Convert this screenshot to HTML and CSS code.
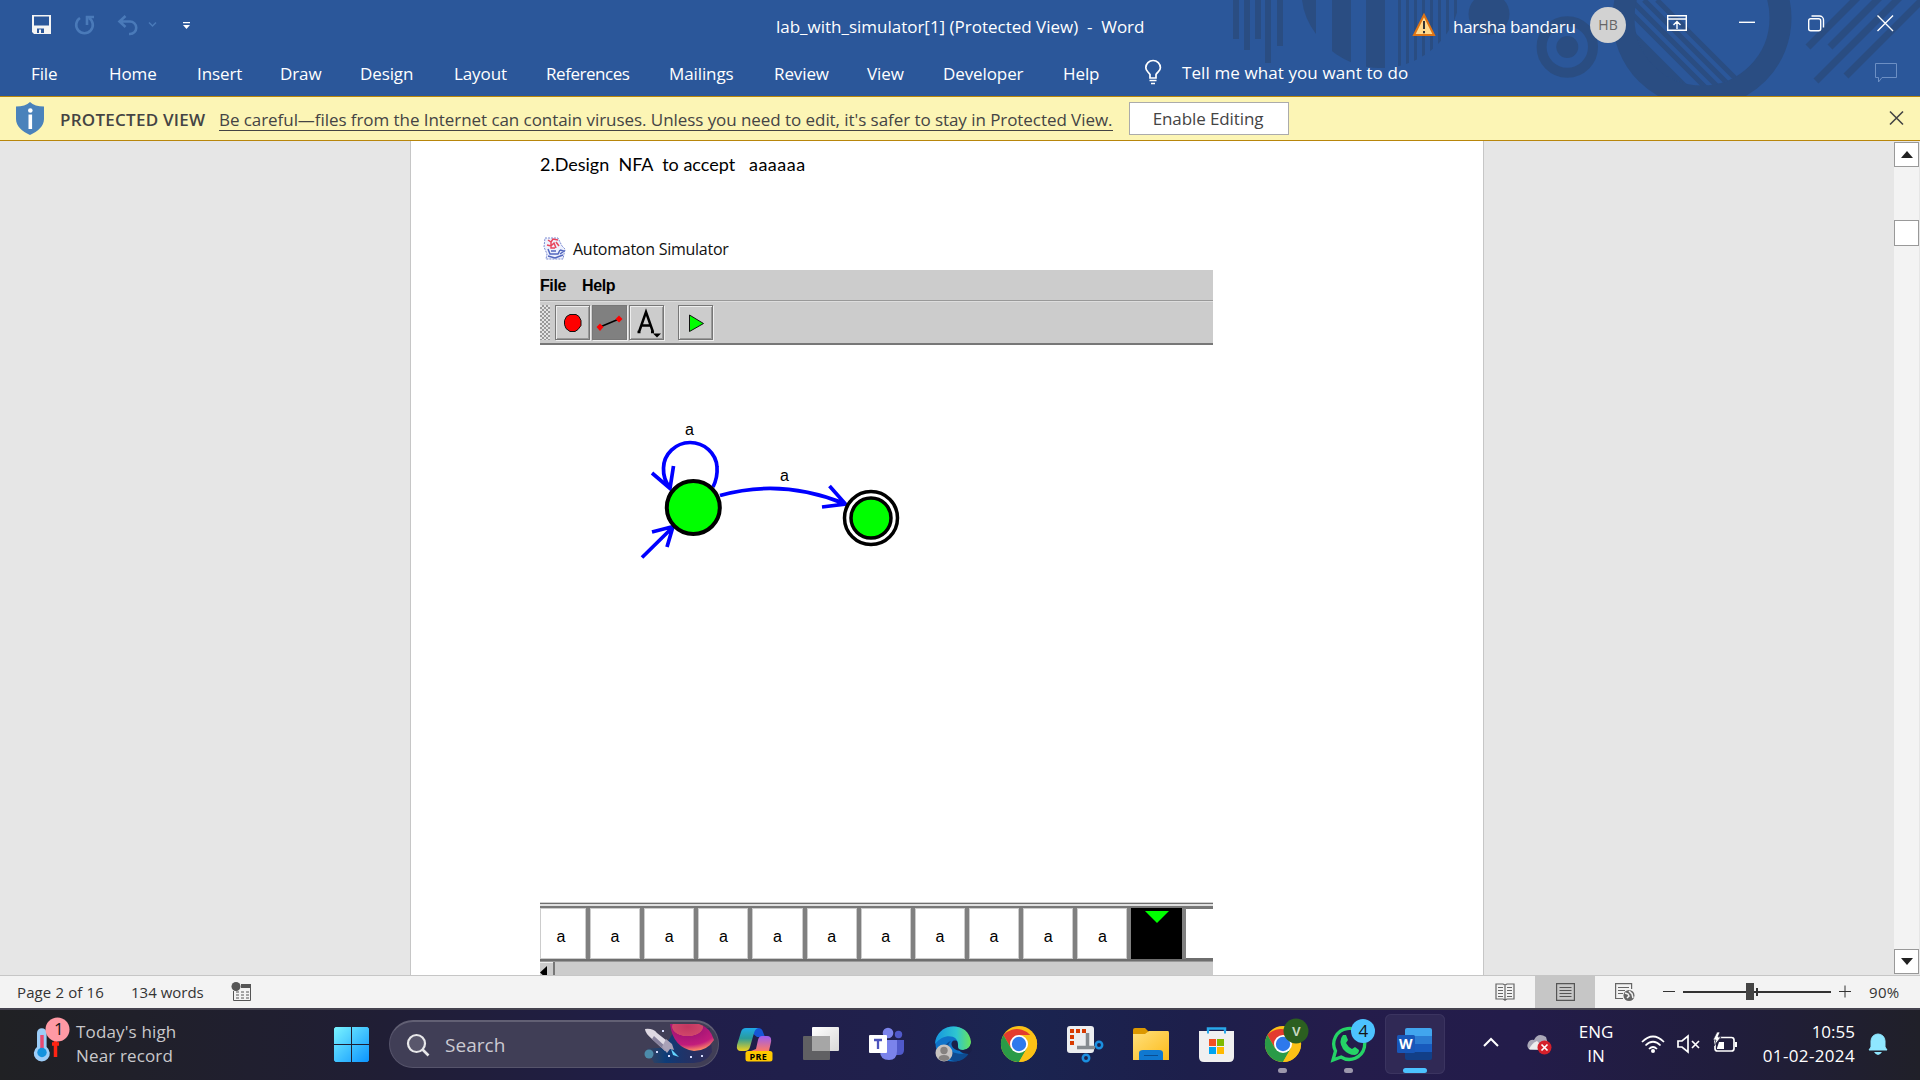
FILE: index.html
```html
<!DOCTYPE html>
<html lang="en">
<head>
<meta charset="utf-8">
<title>lab_with_simulator[1] (Protected View) - Word</title>
<link rel="stylesheet" href="styles.css">
</head>
<body>
<header class="ribbon">
  <svg class="pattern" width="700" height="96" viewBox="1220 0 700 96">
    <defs>
      <clipPath id="ball"><circle cx="1381" cy="-12" r="80"/></clipPath>
      <clipPath id="inner"><circle cx="1702" cy="18" r="68"/></clipPath>
    </defs>
    <g fill="#2a4d82">
      <path d="M1233 0h6v39h-6zM1244 0h6v50h-6zM1255 0h6v39h-6zM1265 0h6v63h-6zM1277 0h6v46h-6z"/>
      <path d="M1302 0h14v34Q1304 18 1302 0z"/>
      <g clip-path="url(#ball)"><path d="M1332 0h19v96h-19zM1366 0h19v96h-19zM1398 0h3v96h-3zM1406 0h3v96h-3zM1414 0h3v96h-3zM1422 0h3v96h-3zM1430 0h3v96h-3zM1438 0h3v96h-3zM1446 0h3v96h-3zM1454 0h3v96h-3z"/></g>
      <circle cx="1489" cy="14" r="20.5"/>
      <circle cx="1567.300" cy="47" r="11"/>
    </g>
    <g fill="none" stroke="#2a4d82">
      <circle cx="1567.300" cy="47" r="25.700" stroke-width="10"/>
      <circle cx="1702" cy="18" r="78.500" stroke-width="22"/>
      <g clip-path="url(#inner)" stroke-width="5">
        <path d="M1657 0l100 100M1644 0l100 100M1631 0l100 100M1618 0l100 100"/>
        <path stroke-width="12" d="M1594 0l100 100"/>
      </g>
      <path stroke-width="7" d="M1808 47l50-50M1830 47l50-50M1816 81l84-84M1846 76l79-79"/>
    </g>
  </svg>
  <div class="titlebar">
    <div class="quick">
      <svg width="170" height="24" viewBox="30 13 170 24">
        <path fill="#f4f4f4" fill-rule="evenodd" d="M32 15h19v19H34l-2-2zM34 16.500v9h15v-9zM37 28.500v4.500h7v-4.500z"/><path fill="#f4f4f4" d="M39 29.500h2v4h-2z"/>
        <g fill="none" stroke="#4a7ab9" stroke-width="2.600"><path d="M80 18a8.300 8.300 0 1 0 9 0M87 25v-8h7"/><path d="M119 21.500h11a6 6 0 0 1 0 12.500h-1M125.500 16l-6 5.500 6 5.500"/><path stroke-width="1.500" d="M149 22.500l3.500 3.500 3.500-3.500"/></g>
        <path fill="#fff" d="M183 22h7v1.200h-7zM183 25h7l-3.500 4z"/>
      </svg>
    </div>
    <div class="doc-title">lab_with_simulator[1] (Protected View)&nbsp; -&nbsp; Word</div>
    <svg class="warn" width="24" height="24" viewBox="0 0 24 24"><path d="M12 2L22 22H2z" fill="#ffd98c" stroke="#e07414" stroke-width="2"/><path d="M12 8v8M12 18v2.200" stroke="#333" stroke-width="2"/></svg>
    <div class="user">harsha bandaru</div>
    <div class="avatar">HB</div>
    <svg class="winbtns" width="230" height="24" viewBox="1667 11 230 24">
      <g fill="none" stroke="#fff" stroke-width="1.400">
        <path d="M1667.700 15.700h18.600v14.600h-18.600zM1668 19h18M1677 29v-7M1673.500 25l3.500-3.500 3.500 3.500"/>
        <path d="M1739 22.300h16" /><rect x="1808.700" y="18.700" width="12" height="12" rx="2"/><path d="M1811.500 16h8a4 4 0 0 1 4 4v7.500"/>
        <path d="M1877.500 15.500l15.500 15.500M1893 15.500l-15.500 15.500"/>
      </g>
    </svg>
  </div>
  <nav class="tabs">
    <span>File</span><span>Home</span><span>Insert</span><span>Draw</span><span>Design</span><span>Layout</span><span class="refs">References</span><span>Mailings</span><span>Review</span><span>View</span><span>Developer</span><span>Help</span>
    <svg width="20" height="26" viewBox="0 0 20 26"><g fill="none" stroke="#fff" stroke-width="1.700"><path d="M6 18v-3.500C4.500 12 1.800 11 1.800 7.800a7.200 7.200 0 0 1 14.600 0c0 3.200-2.900 4.200-4.400 6.700V18zM5.500 20.500h7M7 23.500h4"/></g></svg>
    <span class="tell">Tell me what you want to do</span>
    <svg width="23" height="21" viewBox="0 0 23 21"><path fill="none" stroke="#6c8fc4" d="M.5.500h21v14H7L3.500 19v-4.500h-3z"/></svg>
  </nav>
</header>

<section class="protected">
  <svg width="30" height="34" viewBox="0 0 30 34"><path fill="#4a82bb" d="M15 0c3 3 8 4.500 14 4.500V17c0 7-6 12.500-14 16C7 29.500 1 24 1 17V4.500C7 4.500 12 3 15 0z"/><path fill="#fff" d="M13.500 12.500h3.600V27h-3.600z"/><circle cx="15.300" cy="8.500" r="2.300" fill="#fff"/></svg>
  <b>PROTECTED VIEW</b>
  <span class="msg">Be careful—files from the Internet can contain viruses. Unless you need to edit, it's safer to stay in Protected View.</span>
  <button>Enable Editing</button>
  <svg class="dismiss" width="15" height="14" viewBox="0 0 15 14"><path d="M1 .500l13 13M14 .500L1 13.500" stroke="#444" stroke-width="1.600"/></svg>
</section>

<main class="workspace">
  <article class="page">
    <p class="question">2.Design&nbsp; NFA&nbsp; to accept&nbsp;&nbsp; <span>aaaaaa</span></p>
    <section class="sim">
      <div class="sim-title">
        <svg width="24" height="24" viewBox="0 0 24 24"><path fill="#eef1fd" stroke="#7b8bd2" stroke-dasharray="2 1" d="M2 1h13l4 8 3 3-2 10H3l1-5-3-7z"/><g fill="none"><path stroke="#e8455c" stroke-width="1.500" d="M5 3l3 2 2-3 5 1M4 8l4 1 3-3 2 5M8 5v6h4M13 5l3 4"/><path stroke="#5367be" stroke-width="1.500" d="M5 12l2 5h8l2-4M5 19l7 2 8-3M17 13l4 1-4 3M8 14h5"/></g></svg>
        <span>Automaton Simulator</span>
      </div>
      <div class="sim-menu"><b>File</b><b>Help</b></div>
      <div class="sim-tools">
        <i class="grip"></i>
        <span class="tool"><svg width="35" height="35"><path d="M15 9.500h6l3 2 2 4v5l-3 4-3 2h-5l-4-3-1.500-4v-4l2-4z" fill="red" stroke="#111"/></svg></span>
        <span class="tool on"><svg width="35" height="35"><path d="M8 22l19-8" stroke="#000" stroke-width="1.600"/><path d="M8 18.500l3.500 3.500L8 26l-3.500-4zM27 10.500l3.500 3.500-3.500 3.500-3.500-3.500z" fill="red"/></svg></span>
        <span class="tool"><svg width="35" height="35"><path d="M10 27l7-20 7 20M12 20.500h10M8.500 27h3M22 27h3" fill="none" stroke="#000" stroke-width="2.500"/><path d="M24 28.500h8l-4 4z"/></svg></span>
        <span class="tool run"><svg width="35" height="35"><path d="M11.500 10v16.500L25.500 18.500z" fill="#0f0" stroke="#111"/></svg></span>
      </div>
      <svg class="canvas" width="673" height="557" viewBox="540 345 673 557">
        <g fill="none" stroke="#00f" stroke-width="3.700">
          <path d="M713 487C717 479 717.500 473 717 467A27 26 0 0 0 690 442.500A27 26 0 0 0 663.500 468Q663 479 670 488M652 473L670 488.500 673.500 466"/>
          <path d="M720 495.500Q782 478 845 504M829.500 486L845.500 504 822 507"/>
          <path d="M642 557.500L673 527M652 532L673 526.500 667 547"/>
        </g>
        <circle cx="693.300" cy="507.500" r="26.500" fill="#0f0" stroke="#000" stroke-width="4"/>
        <circle cx="871" cy="518" r="26.500" fill="#fff" stroke="#000" stroke-width="3.500"/>
        <circle cx="871" cy="518" r="20" fill="#0f0" stroke="#000" stroke-width="3.500"/>
        <g class="label"><text x="685" y="435">a</text><text x="780" y="481">a</text></g>
      </svg>
      <div class="tape">
        <span class="first">a</span><span>a</span><span>a</span><span>a</span><span>a</span><span>a</span><span>a</span><span>a</span><span>a</span><span>a</span><span>a</span><span class="head"><svg width="24" height="13"><path d="M0 0h24L12 12z" fill="#0f0"/></svg></span>
      </div>
      <div class="tape-scroll"><i><svg width="7" height="14"><path d="M7 0v13L0 6.500z"/></svg></i></div>
    </section>
  </article>
  <div class="scrollbar">
    <i class="box"><svg width="12" height="7"><path d="M6 0l6 7H0z" fill="#222"/></svg></i>
    <i class="thumb"></i>
    <i class="box down"><svg width="12" height="7"><path d="M0 0h12L6 7z" fill="#222"/></svg></i>
  </div>
</main>

<footer class="status">
  <span class="pages">Page 2 of 16</span><span class="words">134 words</span>
  <svg width="22" height="20" viewBox="0 0 22 20"><path d="M2.500 9v9.500h17V2" fill="none" stroke="#555"/><path d="M10 2h10v4H10z" fill="#555"/><circle cx="5" cy="4.500" r="4.500" fill="#555"/><path d="M5 10h13M5 13h13M5 16h13" stroke="#555" stroke-dasharray="3 2"/></svg>
  <div class="views">
    <span><svg width="20" height="18"><path fill="none" stroke="#666" stroke-width="1.200" d="M10 2v16M1 1h7l2 1 2-1h7v15h-7l-2 1-2-1H1zM3 4.500h5M3 7.500h5M3 10.500h5M3 13.500h5M12 4.500h5M12 7.500h5M12 10.500h5M12 13.500h5"/></svg></span>
    <span class="active"><svg width="19" height="18"><path fill="none" stroke="#555" stroke-width="1.200" d="M.600.600h17.800v16.800H.600zM3.500 4.500h12M3.500 7.500h12M3.500 10.500h12M3.500 13.500h12"/></svg></span>
    <span><svg width="20" height="19"><path fill="none" stroke="#666" stroke-width="1.200" d="M8 15.500H.600V.600h16V6M3 4.500h11M3 7.500h7M3 10.500h5"/><circle cx="14" cy="12.500" r="5.500" fill="#666"/><path d="M10 10l3 1 1 2-2 2M14 8l3 3 1 4" stroke="#f3f3f3" fill="none" stroke-width="1.500"/></svg></span>
  </div>
  <svg class="zoom" width="190" height="18" viewBox="1662 983 190 18"><g stroke="#333"><path d="M1663 991.500h12M1839 991.500h12M1845 985.500v12" /><path stroke-width="2" d="M1683 992h148M1757 988v8"/></g><path fill="#444" d="M1746 983h8v17h-8z"/></svg>
  <span>90%</span>
</footer>

<footer class="taskbar">
  <div class="weather">
    <svg width="38" height="46" viewBox="32 1016 38 46"><path stroke="#ff2413" stroke-width="3.500" d="M55.500 1040v16M52 1043h7"/><path d="M37 1032a4.800 4.800 0 0 1 9.600 0v14a8 8 0 1 1-9.600 0z" fill="#9ccdf8"/><path d="M42 1034v17" stroke="#e84a72" stroke-width="3.500"/><circle cx="42" cy="1051.500" r="4.700" fill="#1492dd"/><circle cx="57.500" cy="1028.500" r="12" fill="#ff99a4"/><text class="badge-text" x="54" y="1034">1</text></svg>
    <div>Today's high<br>Near record</div>
  </div>
  <svg class="start" width="35" height="35"><defs><linearGradient id="win" x2="1" y2="1"><stop stop-color="#7af4ff"/><stop offset="1" stop-color="#0b94ff"/></linearGradient></defs><path fill="url(#win)" d="M1.500 0H17v17H0V1.500zM18 0h15.500L35 1.500V17H18zM0 18h17v17H1.500L0 33.500zM18 18h17v15.500L33.500 35H18z"/></svg>
  <div class="search">
    <svg width="24" height="24"><circle cx="10.500" cy="10.500" r="8.500" fill="#ffffff22" stroke="#e8e8ea" stroke-width="2.200"/><path d="M16.500 16.500l6 6" stroke="#e8e8ea" stroke-width="2.600"/></svg>
    <span>Search</span>
    <svg class="space" width="72" height="40"><defs><linearGradient id="sea"><stop stop-color="#0c4a80" stop-opacity="0"/><stop offset=".3" stop-color="#0e3c78"/><stop offset="1" stop-color="#24205e" stop-opacity=".5"/></linearGradient><radialGradient id="planet" cx=".4" cy=".1" r=".9"><stop stop-color="#c23660"/><stop offset=".38" stop-color="#d0466a"/><stop offset=".4" stop-color="#a91676"/><stop offset=".75" stop-color="#c21c7c"/><stop offset="1" stop-color="#ff8a66"/></radialGradient></defs><path fill="url(#sea)" d="M2 24h18l12-20h34l2 24q-6 11-18 11H10z"/><path d="M26 0h29q11 3 15 16-7 11-20 11Q29 24 26 0z" fill="url(#planet)"/><path d="M1 5q8-1 12 4l14 11-6 7L8 15Q1 9 1 5z" fill="#ded9e3"/><path d="M8 15l13 12 2-3L10 12z" fill="#86809c"/><path d="M22 15l6 5 2 6-4-1-3 4-5-6z" fill="#aaa2b8"/><path d="M27 25l8 8-6-2z" fill="#65d5ff"/><circle cx="5" cy="30" r="4.500" fill="#4c8baa"/><path d="M18 6h2v2h-2zM12 27h2v2h-2zM24 31h2v2h-2zM46 32h2v2h-2zM57 31h2v2h-2z" fill="#d7ddff"/></svg>
  </div>
  <div class="apps">
    <span><svg width="36" height="36"><defs><linearGradient id="cpa" x2="0" y2="1"><stop stop-color="#1fa8e8"/><stop offset=".45" stop-color="#2a9c9a"/><stop offset="1" stop-color="#f2d21c"/></linearGradient><linearGradient id="cpb" x2="0" y2="1"><stop stop-color="#9a5cf0"/><stop offset="1" stop-color="#ff7a64"/></linearGradient></defs><path fill="#1655d6" d="M9 2h12q4 0 5 4l2 5h-8z"/><path fill="url(#cpa)" d="M9 2h12q-3 1-4 5l-4 14q-1 4-5 4H4q-5 0-4-6L4 6q1-4 5-4z"/><path fill="url(#cpb)" d="M25 10h5q5 0 4 6l-2 9H14l5-2 2-9q1-4 4-4z"/><rect x="8.500" y="25" width="27" height="10.500" rx="2.500" fill="#ffc800"/><text class="pre" x="12.500" y="33.500">PRE</text></svg></span>
    <span><svg width="36" height="36"><defs><linearGradient id="tv" x2="1" y2="1"><stop stop-color="#fff"/><stop offset="1" stop-color="#d8d8d8"/></linearGradient></defs><rect y="10" width="27" height="24" rx="1" fill="#606063"/><rect x="9" y="1" width="27" height="24" rx="1" fill="url(#tv)"/><path d="M9 10h18v15H9z" fill="#a6a6a6"/></svg></span>
    <span><svg width="36" height="36"><circle cx="29.500" cy="8.500" r="3.700" fill="#5059c9"/><circle cx="19" cy="7" r="5.300" fill="#7b83eb"/><path d="M24 14h11v10q0 5-5 5h-6z" fill="#5059c9"/><path d="M11 14h17v11q0 9-8 9-9 0-9-9z" fill="#7b83eb"/><rect y="9" width="18" height="18" rx="1" fill="#fff"/><path d="M5 14h8M9 14v9" stroke="#4b53bc" stroke-width="2.300"/></svg></span>
    <span><svg width="36" height="36"><defs><linearGradient id="ed"><stop stop-color="#1595df"/><stop offset=".6" stop-color="#2fc6d0"/><stop offset="1" stop-color="#68e45a"/></linearGradient></defs><circle cx="18" cy="18" r="17.500" fill="#0f73c9"/><path d="M0 18C1-4 34-6 36 16c0 7-6 9-12 8-3-1-3-2-1-5 1-10-14-13-23-1z" fill="url(#ed)"/><path d="M16 15c-8 8 2 15 18 12-3 5-8 9-15 8-11-2-14-16-3-20z" fill="#0d4b91"/><path d="M22 15c-8-3-8 10 5 10h9V18c-2 6-8 7-12 5-2-2 0-4-2-8z" fill="#1b2049"/><path d="M24 24c8 1 12-3 12-8l1 8-3 4c-4 0-8-1-10-4z" fill="#1b2049"/><circle cx="9" cy="27" r="8.500" fill="#c7c3c0"/><circle cx="9" cy="24.500" r="3.700" fill="#85817f"/><path d="M3.500 33q0-4 5.500-4t5.500 4q-5 4-11 0z" fill="#85817f"/></svg></span>
    <span><svg width="36" height="36" viewBox="0 0 36 36"><g id="chrome"><circle cx="18" cy="18" r="18" fill="#fbc116"/><path d="M18 18H33.600A18 18 0 0 0 2.400 9L10.200 22.500z" fill="#e33b2e"/><path d="M33.600 9H18v9z" fill="#e33b2e"/><path d="M2.400 9A18 18 0 0 0 18 36l7.800-13.500L18 18l-7.800 4.500z" fill="#2a9b47"/><path d="M33.600 9H18v9l7.800 4.500L18 36A18 18 0 0 0 33.600 9z" fill="#fbc116"/><circle cx="18" cy="18" r="9" fill="#fff"/><circle cx="18" cy="18" r="7.200" fill="#2d79ec"/></g></svg></span>
    <span><svg width="36" height="36"><rect width="27" height="27" rx="3" fill="#eceef0"/><path d="M3 3h4v4H3zM9 3h4v4H9zM15 3h4v4h-4zM3 9h4v4H3zM3 15h4v4H3z" fill="#d83b01"/><path d="M20.500 7v15M10 21.500h18" stroke="#858b90" stroke-width="3.500"/><g fill="none" stroke="#1a8fe0" stroke-width="2.500"><circle cx="32" cy="19" r="3.200"/><circle cx="19" cy="32" r="3.200"/></g></svg></span>
    <span><svg width="36" height="36"><defs><linearGradient id="fd" x2="1" y2="1"><stop stop-color="#ffe07c"/><stop offset="1" stop-color="#fdbb1a"/></linearGradient></defs><path d="M0 4q0-2 2-2h10l4 4v4H0z" fill="#dc9800"/><path d="M0 8h12l4-3h19q1 0 1 2v27H0z" fill="url(#fd)"/><path d="M6 34v-7q0-3 4-3h16q4 0 4 3v7z" fill="#0f78d0"/><path d="M11 29.500h14" stroke="#0a4d91"/></svg></span>
    <span><svg width="36" height="36"><path d="M9 8V2.500h17V8" fill="none" stroke="#28a8ea" stroke-width="2.500"/><path d="M0 5h35v26q0 5-5 5H5q-5 0-5-5z" fill="#f0f0f0"/><path d="M9 7.500V3M26 7.500V3" stroke="#28a8ea" stroke-width="2"/><path d="M10 13h7v7h-7z" fill="#f25022"/><path d="M18 13h7v7h-7z" fill="#7fba00"/><path d="M10 21h7v7h-7z" fill="#00a4ef"/><path d="M18 21h7v7h-7z" fill="#ffb900"/></svg></span>
    <span class="running"><svg width="44" height="44" viewBox="0 -8 44 44"><use href="#chrome"/><circle cx="31" cy="5" r="12.500" fill="#2b5f20"/><text class="v" x="27" y="10">V</text></svg></span>
    <span class="running"><svg width="44" height="44" viewBox="0 -8 44 44"><path d="M2 34l2.500-9A15.500 15.500 0 1 1 10 31z" fill="none" stroke="#25d366" stroke-width="3.300"/><path d="M12 9l3 0 2 5-2 3q2 4 6 6l3-2 4 3q0 4-4 5-7 0-12-6-5-8 0-14z" fill="#25d366"/><circle cx="32" cy="5" r="12" fill="#4cc2ff"/><text class="badge-text" x="27.500" y="11">4</text></svg></span>
    <span class="running current"><svg width="36" height="36"><path d="M8 4q0-2 2-2h23q2 0 2 2v6H8z" fill="#41a5ee"/><path d="M8 10h27v8H8z" fill="#2b7cd3"/><path d="M8 18h27v8H8z" fill="#185abd"/><path d="M8 26h27v6q0 2-2 2H10q-2 0-2-2z" fill="#123f87"/><rect y="9" width="18" height="18" rx="1.500" fill="#1857b8"/><text class="w" x="2" y="23">W</text></svg></span>
  </div>
  <svg class="tray" width="70" height="26" viewBox="1482 1034 70 26"><path d="M1484 1048l7-7 7 7" fill="none" stroke="#fff" stroke-width="2"/><path d="M1530 1052q-4-3-2-7 2-4 6-3 4-8 12-3 1 3 2 8v5z" fill="#aaa8b8"/><path d="M1529 1051q3-6 8-8l9 9z" fill="#eee"/><circle cx="1544.500" cy="1049.500" r="7" fill="#d5202b"/><path d="M1541.500 1046.500l6 6M1547.500 1046.500l-6 6" stroke="#fff" stroke-width="1.700"/></svg>
  <div class="lang">ENG<br>IN</div>
  <svg class="net" width="98" height="24" viewBox="1641 1031 98 24"><g fill="none" stroke="#fff" stroke-width="1.700"><path d="M1642 1041q11-11 22 0M1645.500 1044.500q7.500-7.500 15 0M1649 1048q4-4 8 0"/><path d="M1678 1040h4l6-5v16l-6-5h-4zM1692 1040l7 7M1699 1040l-7 7"/><rect x="1715" y="1036.500" width="19" height="13.500" rx="2.500"/></g><circle cx="1653" cy="1050" r="2" fill="#fff"/><path d="M1735 1041h2v5h-2zM1717 1047l2-6h5v7h-7z" fill="#fff"/><path d="M1717 1031l-4 8h3l-2 6 7-9h-3l2-5z" fill="#fff" stroke="#201e38" stroke-width=".700"/></svg>
  <div class="clock">10:55<br><span>01-02-2024</span></div>
  <svg class="bell" width="20" height="24"><path d="M1 18l2-3V9a7 7 0 0 1 14 0v6l2 3z" fill="#8fe7ff" stroke="#8fe7ff"/><path d="M6 20h8q-4 6-8 0z" fill="#8fe7ff"/></svg>
</footer>
</body>
</html>
```
FILE: styles.css
```css
* { box-sizing: border-box; }
body { margin: 0; width: 1920px; height: 1080px; overflow: hidden; display: flex; flex-direction: column; font: 17px/24px "Open Sans", sans-serif; }
svg { display: block; flex: none; overflow: visible; }
span, b, div { white-space: nowrap; }

.ribbon { position: relative; height: 96px; flex: none; background: #2b579a; color: #fff; }
.pattern { position: absolute; right: 0; top: 0; overflow: hidden; }
.titlebar { position: relative; height: 50px; display: flex; align-items: center; }
.quick { width: 776px; padding-left: 30px; }
.doc-title { width: 636px; padding-top: 3px; letter-spacing: -.01px; }
.warn { margin-right: 17px; }
.user { width: 137px; padding-top: 3px; letter-spacing: -.3px; }
.avatar { width: 36px; height: 36px; border-radius: 50%; background: #d2d2d2; color: #666; font-size: 14px; line-height: 36px; text-align: center; margin-right: 41px; }
.winbtns { margin-top: -4px; }
.tabs { position: relative; height: 46px; display: grid; grid-template-columns: 78px 88px 83px 80px 94px 92px 123px 105px 93px 76px 120px 81px 38px 693px 23px; padding-left: 31px; align-items: center; }
.tabs span { margin-top: 1px; letter-spacing: -.1px; }
.tabs .refs { letter-spacing: -.45px; }
.tabs .tell { letter-spacing: .1px; margin-top: -1px; }

.protected { height: 45px; flex: none; background: #fcf5b5; border: solid #b8860b; border-width: 1px 0; display: flex; align-items: center; color: #444; padding-left: 15px; }
.protected b { width: 159px; margin-left: 15px; font-weight: 600; letter-spacing: .25px; padding-top: 2px; }
.msg { border-bottom: 1px solid #444; line-height: 21px; letter-spacing: -.06px; width: 894px; margin-top: 2px; }
.protected button { width: 160px; height: 33px; margin-left: 16px; margin-top: -1px; background: #fff; border: 1px solid #ababab; color: #444; font: inherit; letter-spacing: -.1px; padding: 1px 2px 0 0; }
.dismiss { margin: -2px 16px 0 auto; }

.workspace { height: 834px; flex: none; background: #e6e6e6; display: flex; overflow: hidden; }
.page { margin-left: 410px; width: 1074px; height: 900px; flex: none; background: #fff; border: solid #c6c6c6; border-width: 0 1px; padding: 0 0 0 129px; }
.question { margin: 0; height: 93px; padding-top: 11px; font: 18px/24px Lato, sans-serif; letter-spacing: 0; color: #000; }
.question span { letter-spacing: .5px; }
.sim { width: 673px; }
.sim-title { height: 36px; display: flex; font-size: 16px; letter-spacing: -.26px; color: #111; padding-left: 3px; }
.sim-title svg { margin: 3px 6px 0 0; }
.sim-title span { padding-top: 3px; }
.sim-menu { height: 31px; background: #ccc; border-bottom: 1px solid #999; display: flex; font: bold 16px/31px "Liberation Sans", sans-serif; letter-spacing: -.4px; color: #000; }
.sim-menu b { width: 42px; }
.sim-tools { height: 44px; background: #ccc; border-top: 1px solid #ddd; border-bottom: 2px solid #777; display: flex; padding-top: 3px; }
.grip { width: 10px; height: 35px; margin-right: 5px; background: repeating-conic-gradient(#999 0 25%, #e4e4e4 0 50%) 0 0 / 4px 4px; }
.tool { width: 35px; height: 35px; margin-right: 2px; border: 1px solid #777; box-shadow: inset 1px 1px #eee, inset -1px -1px #999, 1px 1px #eee; }
.tool svg { margin: -1px; }
.tool.on { background: #808080; box-shadow: 1px 1px #eee; }
.tool.run { margin-left: 12px; }
.label { font: 16px "Liberation Sans", sans-serif; }
.tape { height: 59px; border-top: 1px solid #d0d0d0; border-bottom: 3px solid #6e6e6e; display: flex; padding-top: 5px; background: linear-gradient(#6e6e6e 0 1px, #e0e0e0 1px 3px, #777 3px 6px, transparent 6px); font: 16px/50px "Liberation Sans", sans-serif; color: #000; }
.tape span { width: 54.150px; height: 51px; border-right: 4px solid #808080; text-align: center; padding-top: 4px; box-shadow: inset 1px 1px #ccc, inset -1px -1px #ccc; }
.tape .first { width: 50px; padding-right: 4px; }
.tape .head { background: #000; box-shadow: none; padding: 3px 0 0 14px; }
.tape-scroll { height: 30px; background: #ccc; border-top: 1px solid #999; }
.tape-scroll i { display: block; width: 15px; height: 30px; border-right: 2px solid #777; padding-top: 4px; box-shadow: inset 0 1px #eee; }
.scrollbar { width: 25px; margin: 1px 0 1px auto; margin-right: 1px; height: 832px; background: #f3f3f3; display: flex; flex-direction: column; }
.scrollbar i { width: 25px; height: 25px; background: #fff; border: 1px solid #999; display: grid; place-items: center; }
.scrollbar .thumb { height: 26px; margin-top: 53px; }
.scrollbar .down { margin-top: auto; }

.status { height: 33px; flex: none; background: #f3f3f3; border-top: 1px solid #c6c6c6; display: flex; align-items: center; font-size: 15px; color: #333; padding-left: 17px; }
.pages { width: 114px; letter-spacing: .12px; }
.words { width: 100px; }
.views { display: flex; align-self: stretch; margin-left: auto; margin-right: 7px; }
.views span { width: 60px; display: grid; place-items: center; }
.views .active { background: #c6c6c6; }
.zoom { margin-right: 17px; }
.status > span:last-child { width: 51px; letter-spacing: .3px; }

.taskbar { height: 72px; flex: none; border-top: 2px solid #45434f; background: linear-gradient(90deg, #202124, #201e35 20%, #201e4a 36%, #20204c 46%, #1a2450 53%, #1d1f4b 62%, #241c4b 70%, #231c4a 79%, #201d3c 90%, #202029); display: flex; align-items: center; padding-bottom: 2px; color: #fff; }
.weather { display: flex; width: 334px; padding-left: 32px; color: #c9c8cb; }
.weather svg { margin-top: -3px; }
.weather div { padding-left: 6px; letter-spacing: .15px; }
.badge-text { font: 17px "Open Sans", sans-serif; fill: #151515; }
.search { width: 330px; height: 48px; margin: 0 3px 0 20px; border: 1px solid #56546b; border-top: 2px solid #626074; border-radius: 24px; background: #403e56; display: flex; align-items: center; padding-left: 17px; font-size: 19px; color: #cbcad2; }
.search > svg:first-child { margin-left: -1px; }
.search span { width: 214px; padding-left: 15px; letter-spacing: .05px; }
.space { margin-top: -2px; }
.apps { display: flex; height: 60px; }
.apps > span { width: 66px; height: 60px; display: grid; place-items: center; position: relative; }
.apps .running::after { content: ""; position: absolute; left: 28px; bottom: 1px; width: 9px; height: 5px; border-radius: 3px; background: #9c97ac; }
.apps .running svg[width="44"] { margin: -8px 0 0 8px; }
.apps .current { width: 60px; margin-left: 3px; border-radius: 6px; background: #302955; box-shadow: inset 0 0 0 1px #3b3460; }
.apps .current::after { left: 18px; width: 24px; background: #4cc2ff; }
.pre { font: bold 9px "Open Sans", sans-serif; letter-spacing: .3px; fill: #000; }
.v { font: bold 13px "Liberation Sans", sans-serif; fill: #c8d8c2; }
.w { font: bold 14px "Open Sans", sans-serif; fill: #fff; }
.tray { margin: 2px 0 0 37px; }
.lang { width: 60px; margin-left: 14px; text-align: center; }
.net { margin-left: 15px; }
.clock { margin-left: auto; text-align: right; }
.clock span { letter-spacing: .35px; }
.bell { margin: 0 32px 0 13px; }
```
